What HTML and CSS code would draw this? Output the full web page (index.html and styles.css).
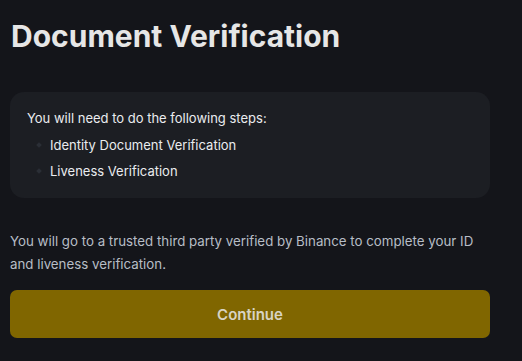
FILE: index.html
```html
<!DOCTYPE html>
<html lang="en">
<head>
    <meta charset="UTF-8">
    <meta name="viewport" content="width=device-width, initial-scale=1.0">
    <title>Document Verification</title>
    <link rel="stylesheet" href="styles.css">
</head>
<body>
    <div class="page">
        <h1 class="title">Document Verification</h1>
        <div class="steps-box">
            <p class="steps-intro">You will need to do the following steps:</p>
            <ul class="steps">
                <li>Identity Document Verification</li>
                <li>Liveness Verification</li>
            </ul>
        </div>
        <p class="note">You will go to a trusted third party verified by Binance to complete your ID and liveness verification.</p>
        <button class="continue-btn">Continue</button>
    </div>
</body>
</html>
```

FILE: styles.css
```css
body {
    margin: 0;
    background-color: #14151a;
    font-family: Inter, "Noto Sans", Arial, sans-serif;
    color: #eaecef;
}

.page {
    width: 480px;
    padding: 14px 10px 0 10px;
}

.title {
    margin: 0 0 0 1px;
    font-size: 30px;
    font-weight: 700;
    line-height: 44px;
    color: #e6e6e6;
}

.steps-box {
    margin-top: 34px;
    background-color: #1c1e23;
    border-radius: 14px;
    padding: 16px 16px 14px 17px;
}

.steps-intro {
    margin: 0;
    font-size: 13px;
    line-height: 20px;
    color: #eaecef;
}

.steps {
    margin: 4px 0 0 0;
    padding: 0 0 0 23px;
    list-style: none;
}

.steps li {
    position: relative;
    font-size: 13px;
    line-height: 26px;
    color: #eaecef;
}

.steps li::before {
    content: "";
    position: absolute;
    left: -13px;
    top: 11px;
    width: 4px;
    height: 4px;
    background-color: #2b2f36;
    transform: rotate(45deg);
}

.note {
    margin: 32px 0 0 0;
    font-size: 13.3px;
    line-height: 23px;
    color: #b7bdc6;
}

.continue-btn {
    display: block;
    width: 100%;
    height: 48px;
    margin-top: 14px;
    border: none;
    border-radius: 7px;
    background-color: #806600;
    color: #d8d4c4;
    font-family: Inter, "Noto Sans", Arial, sans-serif;
    font-size: 15px;
    font-weight: 600;
    cursor: pointer;
}
```
